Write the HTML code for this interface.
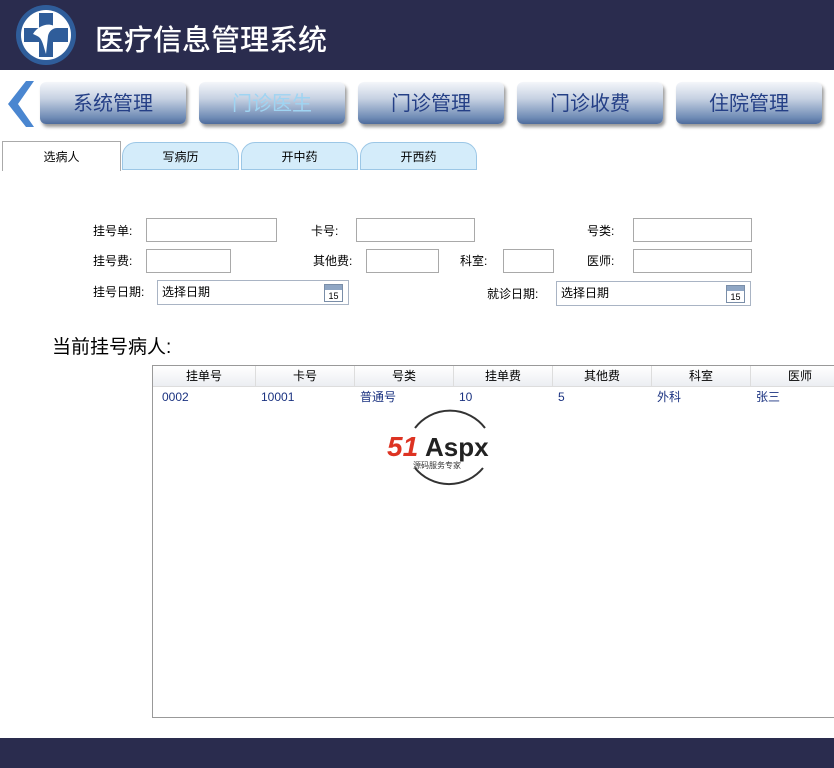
<!DOCTYPE html>
<html><head><meta charset="utf-8"><style>
*{margin:0;padding:0;box-sizing:border-box}
body{width:834px;height:768px;overflow:hidden;background:#fff;font-family:"Liberation Sans","Noto Sans CJK SC",sans-serif;position:relative}
.hdr{position:absolute;left:0;top:0;width:834px;height:70px;background:#2a2c4e}
.hdr .t{position:absolute;left:95px;top:17px;color:#fff;font-size:29px;font-weight:500}
.ftr{position:absolute;left:0;top:738px;width:834px;height:30px;background:#2a2c4e}
.nb{position:absolute;top:82px;width:146px;height:42px;border-radius:6px;background:linear-gradient(#f4f6fa 0%,#c6d1e2 40%,#6f8bb5 85%,#4e6c9c 100%);box-shadow:2px 3px 3px #999;text-align:center;line-height:44px;font-size:20px;color:#243f86}
.tab{position:absolute;top:141px;height:30px;font-size:12px;text-align:center;line-height:30px;color:#000}
.tab.b{background:#d4ecfa;border:1px solid #9cc7e6;border-radius:14px 14px 0 0;top:142px;height:28px;line-height:28px}
.lbl{position:absolute;font-size:12px;color:#000;line-height:14px}
.in{position:absolute;border:1px solid #a9a9a9;background:#fff;height:24px}
.dt{position:absolute;border:1px solid #a9b4c4;height:25px;font-size:12px;line-height:23px;padding-left:4px;background:#fff}
.cal{position:absolute;right:5px;top:3px;width:19px;height:18px;border:1px solid #7a8ea8;background:#fff;font-size:9px;line-height:12px;text-align:center;padding-top:5px}
.cal:before{content:"";position:absolute;left:0;top:0;width:17px;height:5px;background:#8fa6c4}
.grid{position:absolute;left:152px;top:365px;width:690px;height:353px;border:1px solid #999}
.gh{height:21px;background:linear-gradient(#fff,#eceef2);border-bottom:1px solid #ddd;display:flex}
.gh div{width:99px;border-right:1px solid #ddd;text-align:center;font-size:12px;line-height:21px;flex:none}
.gh div:first-child{width:103px}
.gr{display:flex;font-size:12px;color:#1a3280;line-height:20px}
.gr div{width:99px;padding-left:9px;flex:none}
</style></head><body>
<div class="hdr">
<svg style="position:absolute;left:13px;top:4px" width="66" height="62" viewBox="0 0 66 62"><circle cx="33" cy="31" r="30" fill="#2f5d9a"/><circle cx="33" cy="31" r="25" fill="#fff"/><path d="M26 9h14v15h15v14H40v15H26V38H11V24h15z" fill="#2f5d9a"/><path d="M20 30c6-10 18-12 24-6-4 0-8 3-9 8l-2 18c-2-6-3-12-6-16-2-2-5-3-7-4z" fill="#fff"/></svg>
<div class="t">医疗信息管理系统</div></div>
<svg style="position:absolute;left:4px;top:81px" width="30" height="46" viewBox="0 0 30 46"><path d="M22 0L4 23l18 23h8L14 23 30 0z" fill="#4a86d0"/></svg>
<div class="nb" style="left:40px">系统管理</div>
<div class="nb" style="left:199px;color:#9fd4f2">门诊医生</div>
<div class="nb" style="left:358px">门诊管理</div>
<div class="nb" style="left:517px">门诊收费</div>
<div class="nb" style="left:676px">住院管理</div>
<div class="tab" style="left:2px;width:119px;border:1px solid #aaa;border-bottom:none;background:#fff">选病人</div>
<div class="tab b" style="left:122px;width:117px">写病历</div>
<div class="tab b" style="left:241px;width:117px">开中药</div>
<div class="tab b" style="left:360px;width:117px">开西药</div>
<div class="lbl" style="left:93px;top:224px">挂号单:</div><div class="in" style="left:146px;top:218px;width:131px"></div>
<div class="lbl" style="left:311px;top:224px">卡号:</div><div class="in" style="left:356px;top:218px;width:119px"></div>
<div class="lbl" style="left:587px;top:224px">号类:</div><div class="in" style="left:633px;top:218px;width:119px"></div>
<div class="lbl" style="left:93px;top:254px">挂号费:</div><div class="in" style="left:146px;top:249px;width:85px"></div>
<div class="lbl" style="left:313px;top:254px">其他费:</div><div class="in" style="left:366px;top:249px;width:73px"></div>
<div class="lbl" style="left:460px;top:254px">科室:</div><div class="in" style="left:503px;top:249px;width:51px"></div>
<div class="lbl" style="left:587px;top:254px">医师:</div><div class="in" style="left:633px;top:249px;width:119px"></div>
<div class="lbl" style="left:93px;top:285px">挂号日期:</div><div class="dt" style="left:157px;top:280px;width:192px">选择日期<div class="cal">15</div></div>
<div class="lbl" style="left:487px;top:287px">就诊日期:</div><div class="dt" style="left:556px;top:281px;width:195px">选择日期<div class="cal">15</div></div>
<div style="position:absolute;left:52px;top:332px;font-size:19px">当前挂号病人:</div>
<div class="grid">
<div class="gh"><div>挂单号</div><div>卡号</div><div>号类</div><div>挂单费</div><div>其他费</div><div>科室</div><div>医师</div></div>
<div class="gr"><div>0002</div><div>10001</div><div>普通号</div><div>10</div><div>5</div><div>外科</div><div>张三</div></div>
</div>
<svg style="position:absolute;left:385px;top:402px" width="128" height="92" viewBox="0 0 128 92"><path d="M30 26A44 44 0 0 1 100 26M98 66A44 44 0 0 1 30 66" stroke="#333" stroke-width="2" fill="none"/><text x="2" y="54" font-family="Liberation Sans" font-weight="bold" font-style="italic" font-size="28" fill="#d32"> 51</text><text x="40" y="54" font-family="Liberation Sans" font-weight="bold" font-size="26" fill="#222">Aspx</text><text x="28" y="66" font-family="Noto Sans CJK SC" font-size="8" fill="#333">源码服务专家</text></svg>
<div class="ftr"></div>
</body></html>
